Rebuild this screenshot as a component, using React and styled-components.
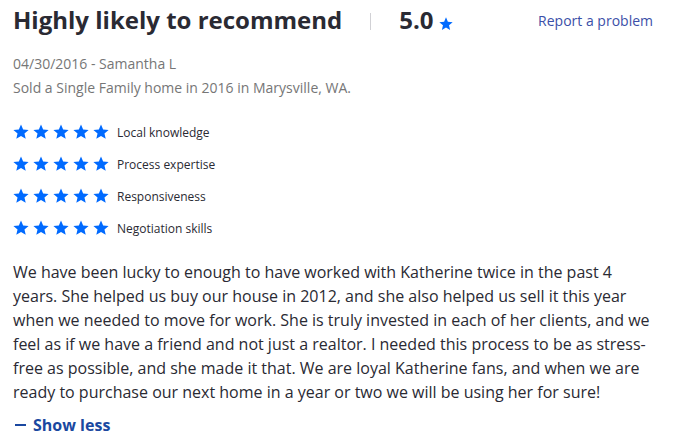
import React from "react";
import styled, { createGlobalStyle } from "styled-components";

const Global = createGlobalStyle`
  html, body { margin: 0; padding: 0; background: #fff; }
  body { font-family: "Open Sans", "Liberation Sans", sans-serif; color: #2a2a33; }
`;

const Card = styled.div`
  width: 640px;
  padding: 4px 13px 0 13px;
`;

const Header = styled.div`
  display: flex;
  align-items: center;
  height: 32px;
`;

const Title = styled.h2`
  margin: 0;
  font-size: 24px;
  line-height: 32px;
  font-weight: 700;
  color: #2a2a33;
`;

const Divider = styled.span`
  width: 1px;
  height: 17px;
  background: #d1d1d5;
  margin: 2px 28px 0 28px;
`;

const Score = styled.span`
  display: flex;
  align-items: baseline;
  font-size: 24px;
  font-weight: 700;
  line-height: 32px;
  color: #2a2a33;
`;

const ScoreStar = styled.span`
  display: inline-flex;
  margin-left: 5px;
  align-self: flex-end;
  margin-bottom: 5px;
`;

const ReportLink = styled.a`
  margin-left: auto;
  font-size: 14px;
  color: #3b4fa8;
  text-decoration: none;
  line-height: 24px;
  margin-top: 2px;
`;

const Meta = styled.div`
  margin-top: 16px;
  font-size: 14px;
  line-height: 24px;
  color: #767676;
`;

const Ratings = styled.ul`
  list-style: none;
  margin: 16px 0 0 0;
  padding: 0;
`;

const RatingRow = styled.li`
  display: flex;
  align-items: center;
  height: 32px;
`;

const Stars = styled.span`
  display: flex;
  gap: 4px;
  margin-left: 0;
  margin-right: 8px;
`;

const Label = styled.span`
  font-size: 12px;
  color: #2a2a33;
`;

const Body = styled.p`
  margin: 16px 0 0 0;
  font-size: 16px;
  line-height: 24px;
  color: #2a2a33;
`;

const Toggle = styled.button`
  display: flex;
  align-items: center;
  gap: 7px;
  margin-top: 9px;
  padding: 0 0 0 2px;
  border: 0;
  background: none;
  font-family: inherit;
  font-size: 16px;
  line-height: 24px;
  font-weight: 700;
  color: #1a48a0;
  cursor: pointer;
`;

const Dash = styled.span`
  width: 11px;
  height: 2px;
  background: #1a48a0;
`;

const Star = ({ size = 16 }) => (
  <svg width={size} height={size} viewBox="1.5 1.5 21 21">
    <path
      fill="#006aff"
      d="M12 17.27L18.18 21l-1.64-7.03L22 9.24l-7.19-.61L12 2 9.19 8.63 2 9.24l5.46 4.73L5.82 21z"
    />
  </svg>
);

const categories = [
  "Local knowledge",
  "Process expertise",
  "Responsiveness",
  "Negotiation skills",
];

export default function App() {
  return (
    <>
      <Global />
      <Card>
        <Header>
          <Title>Highly likely to recommend</Title>
          <Divider />
          <Score>
            5.0
            <ScoreStar>
              <Star size={14} />
            </ScoreStar>
          </Score>
          <ReportLink href="#">Report a problem</ReportLink>
        </Header>
        <Meta>
          04/30/2016 - Samantha L
          <br />
          Sold a Single Family home in 2016 in Marysville, WA.
        </Meta>
        <Ratings>
          {categories.map((c) => (
            <RatingRow key={c}>
              <Stars>
                {[0, 1, 2, 3, 4].map((i) => (
                  <Star key={i} />
                ))}
              </Stars>
              <Label>{c}</Label>
            </RatingRow>
          ))}
        </Ratings>
        <Body>
          We have been lucky to enough to have worked with Katherine twice in the past 4 years. She helped us buy our house in 2012, and she also helped us sell it this year when we needed to move for work. She is truly invested in each of her clients, and we feel as if we have a friend and not just a realtor. I needed this process to be as stress-free as possible, and she made it that. We are loyal Katherine fans, and when we are ready to purchase our next home in a year or two we will be using her for sure!
        </Body>
        <Toggle>
          <Dash />
          Show less
        </Toggle>
      </Card>
    </>
  );
}
